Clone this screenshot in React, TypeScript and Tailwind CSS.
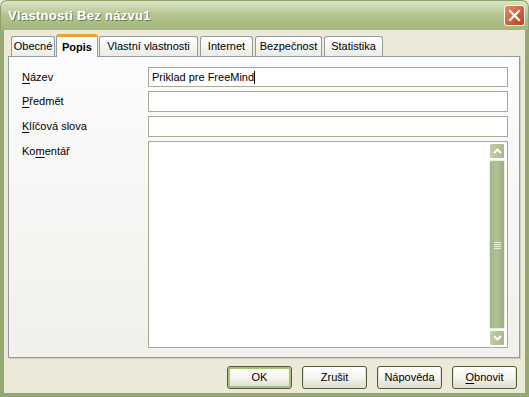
import React from "react";

const tabs: [string, number][] = [
  ["Obecné", 44],
  ["Popis", 42],
  ["Vlastní vlastnosti", 99],
  ["Internet", 53],
  ["Bezpečnost", 67],
  ["Statistika", 59],
];

const Label = ({ pre, key1, post }: { pre: string; key1: string; post: string }) => (
  <div className="h-[20px] flex items-center text-[11px] text-black">
    {pre}
    <span className="underline underline-offset-2">{key1}</span>
    {post}
  </div>
);

const XpButton = ({ children, primary }: { children: React.ReactNode; primary?: boolean }) => (
  <button
    className={`w-[65px] h-[23px] rounded-[3px] border border-[#4F5D3D] text-[11px] text-black bg-gradient-to-b from-[#FFFFFF] via-[#F5F4EF] to-[#DCD9CD] ${
      primary ? "shadow-[inset_0_0_0_2px_#A8C27A]" : "shadow-[inset_0_-1px_0_1px_#E3E0D4]"
    }`}
  >
    {children}
  </button>
);

export default function App() {
  return (
    <div
      className="w-[529px] h-[397px] flex flex-col bg-[#ECE9D8] overflow-hidden"
      style={{ fontFamily: '"Liberation Sans", Arial, sans-serif' }}
    >
      {/* title bar */}
      <div className="h-[30px] shrink-0 rounded-t-[7px] flex items-center justify-between pl-[7px] pr-[3px] bg-gradient-to-b from-[#DCE5C6] via-[#B3C38F] to-[#A2B67C] border-t border-x border-[#8DA16A]">
        <span className="text-white font-bold text-[13px] tracking-[0.3px] [text-shadow:1px_1px_0_#6F7F4E]">
          Vlastnosti Bez názvu1
        </span>
        <div className="w-[21px] h-[21px] rounded-[3px] border border-white bg-gradient-to-br from-[#E98C6A] via-[#D5623B] to-[#B64220] flex items-center justify-center">
          <svg width="13" height="13" viewBox="0 0 13 13">
            <path d="M2 2 L11 11 M11 2 L2 11" stroke="white" strokeWidth="2.2" strokeLinecap="square" />
          </svg>
        </div>
      </div>

      {/* body */}
      <div className="flex-1 flex flex-col border-x-4 border-b-4 border-[#93A76F] bg-[#ECE9D8] px-[4px] pr-[5px] pt-[3px]">
        {/* tabs */}
        <div className="h-[23px] flex items-end pl-[3px] relative z-10">
          {tabs.map(([t, w], i) => {
            const active = i === 1;
            return (
              <div
                key={t}
                style={{ width: w }}
                className={
                  active
                    ? "h-[23px] -mb-px -ml-[1px] mr-[1px] bg-[#FCFCFE] border-x border-[#919B9C] border-t-[3px] border-t-[#F0A030] rounded-t-[3px] text-[11px] font-bold flex items-center justify-center text-black"
                    : "h-[20px] mr-[2px] bg-gradient-to-b from-white to-[#ECEBE6] border border-b-0 border-[#919B9C] rounded-t-[3px] text-[11px] flex items-center justify-center text-black whitespace-nowrap"
                }
              >
                {t}
              </div>
            );
          })}
        </div>

        {/* panel */}
        <div className="h-[302px] border border-[#919B9C] bg-gradient-to-b from-[#FCFCFE] to-[#F1F0EA] pl-[13px] pr-[11px] pt-[10px] shadow-[1px_1px_0_#D0CEBF]">
          <div className="grid grid-cols-[126px_1fr] gap-y-[4px]">
            <Label pre="" key1="N" post="ázev" />
            <div className="h-[20px] border border-[#A5AC93] bg-white flex items-center pl-[3px] text-[11px] text-black">
              Priklad pre FreeMind
              <span className="w-px h-[13px] bg-black" />
            </div>
            <Label pre="" key1="P" post="ředmět" />
            <div className="h-[21px] border border-[#A5AC93] bg-white" />
            <Label pre="" key1="K" post="líčová slova" />
            <div className="h-[21px] border border-[#A5AC93] bg-white" />
            <div className="self-start">
              <Label pre="Ko" key1="m" post="entář" />
            </div>
            <div className="h-[207px] border border-[#A5AC93] bg-white flex justify-end p-[1px] pr-[2px]">
              {/* scrollbar */}
              <div className="w-[16px] flex flex-col gap-[1px]">
                <div className="h-[16px] rounded-[2px] border border-white bg-gradient-to-r from-[#C3CEA8] to-[#A9B88C] flex items-center justify-center">
                  <svg width="9" height="6" viewBox="0 0 9 6">
                    <path d="M1 5 L4.5 1.5 L8 5" stroke="white" strokeWidth="2" fill="none" />
                  </svg>
                </div>
                <div className="flex-1 rounded-[2px] border border-[#E8EEDC] bg-gradient-to-r from-[#A3B586] via-[#B2C196] to-[#9BAD7D] flex items-center justify-center">
                  <svg width="7" height="8" viewBox="0 0 7 8">
                    <path d="M0 1.5 H7 M0 3.5 H7 M0 5.5 H7 M0 7.5 H7" stroke="#E7EEDA" strokeWidth="1" />
                  </svg>
                </div>
                <div className="h-[16px] rounded-[2px] border border-white bg-gradient-to-r from-[#C3CEA8] to-[#A9B88C] flex items-center justify-center">
                  <svg width="9" height="6" viewBox="0 0 9 6">
                    <path d="M1 1 L4.5 4.5 L8 1" stroke="white" strokeWidth="2" fill="none" />
                  </svg>
                </div>
              </div>
            </div>
          </div>
        </div>

        {/* buttons */}
        <div className="flex justify-end gap-[10px] pt-[8px] pr-[3px]">
          <XpButton primary>OK</XpButton>
          <XpButton>Zrušit</XpButton>
          <XpButton>Nápověda</XpButton>
          <XpButton>
            <span className="underline underline-offset-2">O</span>bnovit
          </XpButton>
        </div>
      </div>
    </div>
  );
}
